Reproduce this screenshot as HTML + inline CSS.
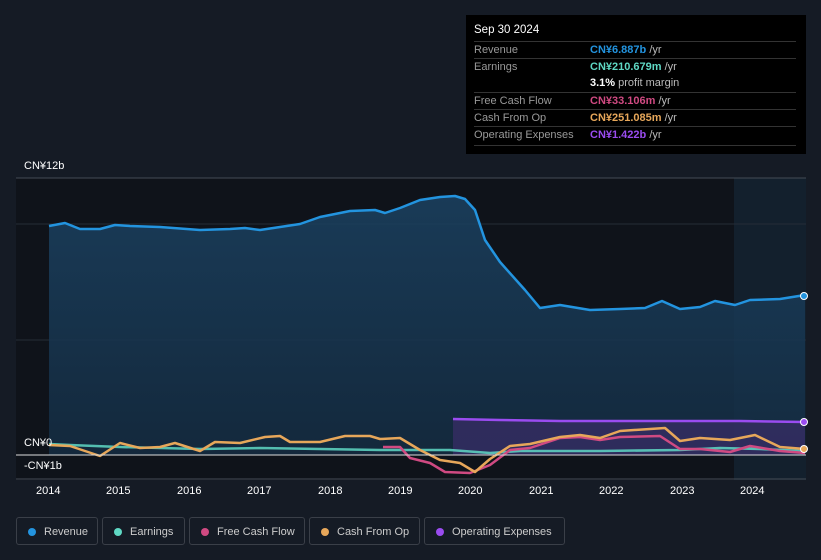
<!DOCTYPE html>
<html><head><meta charset="utf-8"><style>
body{margin:0;width:821px;height:560px;background:#151b25;font-family:"Liberation Sans",sans-serif;overflow:hidden;position:relative}
.tt{position:absolute;left:466px;top:15px;width:340px;height:139px;background:#000;color:#fff;font-size:11px}
.tt .h{position:absolute;left:8px;top:9px;font-size:11.5px}
.row{position:absolute;left:8px;width:322px;height:17px;border-top:1px solid #333;line-height:17px}
.row span.l{color:#999;position:absolute;left:0}
.row span.v{position:absolute;left:116px;color:#bbb}
.leg{position:absolute;top:517px;height:28px;border:1px solid #3a3f48;border-radius:3px;color:#ccc;font-size:11px;line-height:28px;box-sizing:border-box;padding-left:27px}
.leg i{position:absolute;left:11px;top:10px;width:8px;height:8px;border-radius:50%}
.ax{position:absolute;color:#fff;font-size:11px}
</style></head><body>
<svg width="821" height="560" style="position:absolute;left:0;top:0">
<defs><linearGradient id="g" x1="0" y1="0" x2="0" y2="1"><stop offset="0" stop-color="#1b4262"/><stop offset="1" stop-color="#142c42"/></linearGradient></defs>
<rect x="16" y="178" width="790" height="302" fill="#0f131a"/>
<rect x="734" y="178" width="72" height="302" fill="#13202d"/>
<line x1="16" y1="178" x2="806" y2="178" stroke="#444b55"/>
<line x1="16" y1="224" x2="806" y2="224" stroke="#262c36"/>
<line x1="16" y1="340" x2="806" y2="340" stroke="#262c36"/>
<line x1="16" y1="479" x2="806" y2="479" stroke="#444b55"/>
<path d="M49,226 L65,223 L80,229 L100,229 L115,225 L130,226 L160,227 L200,230 L230,229 L245,228 L260,230 L280,227 L300,224 L320,217 L350,211 L375,210 L385,213 L400,208 L420,200 L440,197 L455,196 L465,199 L475,210 L485,240 L500,262 L525,290 L540,308 L560,305 L590,310 L620,309 L645,308 L662,301 L680,309 L700,307 L715,301 L735,305 L750,300 L780,299 L805,295 L805,455 L49,455Z" fill="url(#g)" opacity="0.85"/>
<path d="M49,226 L65,223 L80,229 L100,229 L115,225 L130,226 L160,227 L200,230 L230,229 L245,228 L260,230 L280,227 L300,224 L320,217 L350,211 L375,210 L385,213 L400,208 L420,200 L440,197 L455,196 L465,199 L475,210 L485,240 L500,262 L525,290 L540,308 L560,305 L590,310 L620,309 L645,308 L662,301 L680,309 L700,307 L715,301 L735,305 L750,300 L780,299 L805,295" fill="none" stroke="#2394df" stroke-width="2.5" stroke-linejoin="round"/>
<path d="M453,419 L500,420 L560,421 L620,421 L680,421 L740,421 L805,422 L805,455 L453,455Z" fill="#3b2d6a" opacity="0.7"/>
<path d="M453,419 L500,420 L560,421 L620,421 L680,421 L740,421 L805,422" fill="none" stroke="#9a4cf0" stroke-width="2.5"/>
<path d="M49,444 L70,445 L120,447 L200,449 L260,448 L320,449 L380,450 L450,450 L490,453 L520,451 L600,451 L680,450 L720,448 L760,449 L805,451" fill="none" stroke="#5fd8c4" stroke-width="2.5" opacity="0.85"/>
<path d="M383,447 L400,447 L410,458 L430,463 L445,472 L470,473 L490,465 L510,450 L530,448 L560,438 L580,437 L600,440 L620,437 L660,436 L680,449 L700,449 L730,452 L750,446 L780,451 L805,453" fill="none" stroke="#d04a82" stroke-width="2.5" stroke-linejoin="round"/>
<path d="M49,445 L70,446 L100,456 L120,443 L140,448 L160,447 L175,443 L200,451 L215,442 L240,443 L265,437 L280,436 L290,442 L320,442 L345,436 L370,436 L380,439 L400,438 L420,450 L440,460 L460,463 L475,472 L490,459 L510,446 L530,444 L560,437 L580,435 L600,438 L620,431 L650,429 L665,428 L680,441 L700,438 L730,440 L755,435 L780,447 L805,449" fill="none" stroke="#e7a75a" stroke-width="2.5" stroke-linejoin="round"/>
<line x1="16" y1="455" x2="806" y2="455" stroke="#ddd" stroke-width="1"/>
<circle cx="804" cy="296" r="3.5" fill="#2394df" stroke="#fff"/>
<circle cx="804" cy="422" r="3.5" fill="#9a4cf0" stroke="#fff"/>
<circle cx="804" cy="449" r="3.5" fill="#e7a75a" stroke="#fff"/>
</svg>
<div class="ax" style="left:24px;top:160px">CN¥12b</div>
<div class="ax" style="left:24px;top:437px">CN¥0</div>
<div class="ax" style="left:24px;top:460px">-CN¥1b</div>
<div class="ax" style="left:36px;top:485px">2014</div><div class="ax" style="left:106px;top:485px">2015</div><div class="ax" style="left:177px;top:485px">2016</div><div class="ax" style="left:247px;top:485px">2017</div><div class="ax" style="left:318px;top:485px">2018</div><div class="ax" style="left:388px;top:485px">2019</div><div class="ax" style="left:458px;top:485px">2020</div><div class="ax" style="left:529px;top:485px">2021</div><div class="ax" style="left:599px;top:485px">2022</div><div class="ax" style="left:670px;top:485px">2023</div><div class="ax" style="left:740px;top:485px">2024</div>
<div class="tt"><div class="h">Sep 30 2024</div>
<div class="row" style="top:26px"><span class="l">Revenue</span><span class="v"><b style="color:#2394df">CN¥6.887b</b> /yr</span></div>
<div class="row" style="top:43px"><span class="l">Earnings</span><span class="v"><b style="color:#5fd8c4">CN¥210.679m</b> /yr</span></div>
<div class="row" style="top:60px;border-top:none"><span class="v"><b style="color:#fff">3.1%</b> profit margin</span></div>
<div class="row" style="top:77px"><span class="l">Free Cash Flow</span><span class="v"><b style="color:#d04a82">CN¥33.106m</b> /yr</span></div>
<div class="row" style="top:94px"><span class="l">Cash From Op</span><span class="v"><b style="color:#e7a75a">CN¥251.085m</b> /yr</span></div>
<div class="row" style="top:111px"><span class="l">Operating Expenses</span><span class="v"><b style="color:#9a4cf0">CN¥1.422b</b> /yr</span></div>
<div class="row" style="top:130px;height:0"></div>
</div>
<div class="leg" style="left:16px;width:82px"><i style="background:#2394df"></i>Revenue</div>
<div class="leg" style="left:102px;width:83px"><i style="background:#5fd8c4"></i>Earnings</div>
<div class="leg" style="left:189px;width:116px"><i style="background:#d04a82"></i>Free Cash Flow</div>
<div class="leg" style="left:309px;width:111px"><i style="background:#e7a75a"></i>Cash From Op</div>
<div class="leg" style="left:424px;width:141px"><i style="background:#9a4cf0"></i>Operating Expenses</div>
</body></html>
